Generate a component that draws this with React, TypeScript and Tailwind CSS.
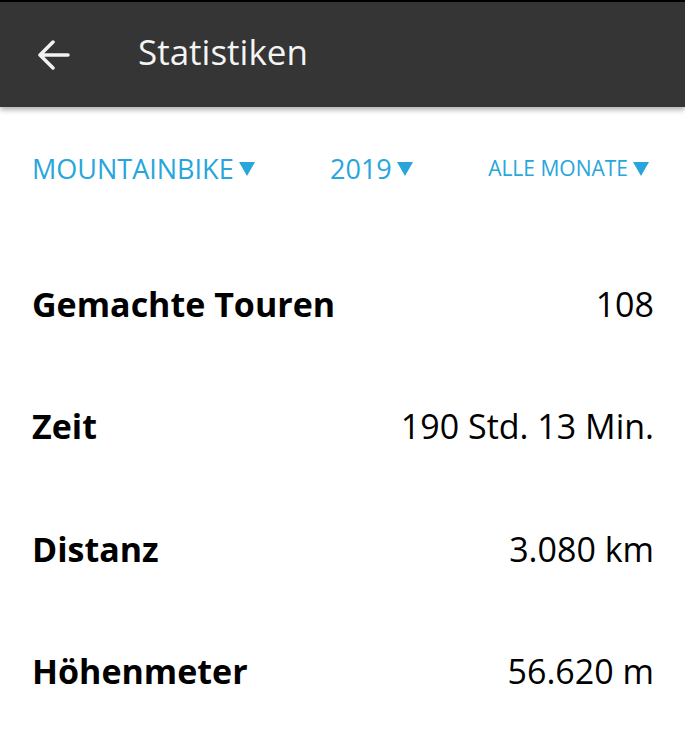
export default function App() {
  const filters = [
    { label: 'MOUNTAINBIKE', cls: 'text-[27px]' },
    { label: '2019', cls: 'text-[27px]' },
    { label: 'ALLE MONATE', cls: 'text-[21px]' },
  ];

  const stats = [
    { label: 'Gemachte Touren', value: '108' },
    { label: 'Zeit', value: '190 Std. 13 Min.' },
    { label: 'Distanz', value: '3.080 km' },
    { label: 'Höhenmeter', value: '56.620 m' },
  ];

  return (
    <main className="w-[685px] h-[750px] bg-white overflow-hidden font-['Open_Sans',sans-serif]">
      {/* Toolbar */}
      <div className="border-t-2 border-black bg-[#353535] h-[107px] flex items-center shadow-[0_3px_5px_rgba(0,0,0,0.3)] relative z-10">
        <svg className="ml-[38px] w-[32px] h-[30px]" viewBox="0 0 32 30" fill="none" stroke="#f2f2f2" strokeWidth="3.5" strokeLinecap="round" strokeLinejoin="round">
          <path d="M30 15H3M15 2L2 15l13 13" />
        </svg>
        <span className="ml-[68px] text-[35px] text-[#f4f4f4] -mt-1">Statistiken</span>
      </div>

      {/* Filters */}
      <div className="flex items-center justify-between pl-[32px] pr-[36px] mt-[44px] h-[36px]">
        {filters.map((f) => (
          <div key={f.label} className={`flex items-center text-[#28a6dc] ${f.cls}`}>
            <span>{f.label}</span>
            <svg className="ml-[5px] w-[16px] h-[14px]" viewBox="0 0 16 14">
              <path d="M0 0h16L8 14z" fill="#28a6dc" />
            </svg>
          </div>
        ))}
      </div>

      {/* Stats */}
      <div className="mt-[56px] pl-[32px] pr-[31px] flex flex-col">
        {stats.map((s) => (
          <div key={s.label} className="flex items-center justify-between h-[122.5px]">
            <span className="text-[34px] font-bold text-black">{s.label}</span>
            <span className="text-[34px] text-black">{s.value}</span>
          </div>
        ))}
      </div>
    </main>
  );
}
